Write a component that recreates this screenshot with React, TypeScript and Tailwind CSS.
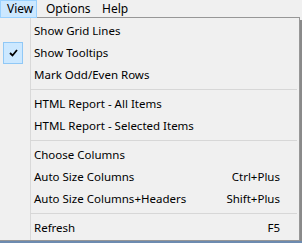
const ITEMS: (
  | { label: string; shortcut?: string; checked?: boolean }
  | 'sep'
)[] = [
  { label: 'Show Grid Lines' },
  { label: 'Show Tooltips', checked: true },
  { label: 'Mark Odd/Even Rows' },
  'sep',
  { label: 'HTML Report - All Items' },
  { label: 'HTML Report - Selected Items' },
  'sep',
  { label: 'Choose Columns' },
  { label: 'Auto Size Columns', shortcut: 'Ctrl+Plus' },
  { label: 'Auto Size Columns+Headers', shortcut: 'Shift+Plus' },
  'sep',
  { label: 'Refresh', shortcut: 'F5' },
]

function Check() {
  return (
    <svg width="9" height="8" viewBox="0 0 9 8" className="block">
      <path d="M1 4 L3.5 6.5 L8 1" fill="none" stroke="#000" strokeWidth="1.8" />
    </svg>
  )
}

export default function App() {
  return (
    <div className="w-[302px] h-[243px] overflow-hidden bg-[#f0f0f0] text-[11.5px] text-black font-['Noto_Sans',sans-serif] leading-none">
      {/* menu bar */}
      <div className="flex h-[17px] items-stretch text-[12px]">
        <div className="w-[37px] bg-[#cce8ff] border border-b-0 border-[#99d1ff] flex items-center pl-[6px]">View</div>
        <div className="w-[58px] flex items-center pl-[9px]">Options</div>
        <div className="flex items-center pl-[7px]">Help</div>
      </div>

      {/* dropdown */}
      <div className="flex">
        <div className="w-[300px]">
          <div className="flex h-px">
            <div className="w-[37px] bg-[#99d1ff]" />
            <div className="flex-1 bg-[#979797]" />
          </div>
          <div className="border-r border-b border-[#979797] pt-[2px] pb-px bg-[linear-gradient(to_right,transparent_30px,#d9d9d9_30px,#d9d9d9_31px,transparent_31px)]">
            {ITEMS.map((it, i) =>
              it === 'sep' ? (
                <div key={i} className="h-[7px] flex items-center pl-[30px] pr-[2px]">
                  <div className="h-px w-full bg-[#d7d7d7]" />
                </div>
              ) : (
                <div key={i} className="h-[22px] flex items-center">
                  <div className="w-[30px] h-full pl-[3px]">
                    {it.checked && (
                      <div className="w-[20px] h-full bg-[#cce8ff] border border-[#90c8f6] flex items-center justify-center">
                        <Check />
                      </div>
                    )}
                  </div>
                  <div className="pl-[4px] flex-1">{it.label}</div>
                  {it.shortcut && <div className="pr-[19px]">{it.shortcut}</div>}
                </div>
              )
            )}
          </div>
        </div>
        <div className="w-[2px] mt-[3px] bg-[#8a8a8a]" />
      </div>
      <div className="h-[2px] bg-[#6d8bb0]" />
    </div>
  )
}
